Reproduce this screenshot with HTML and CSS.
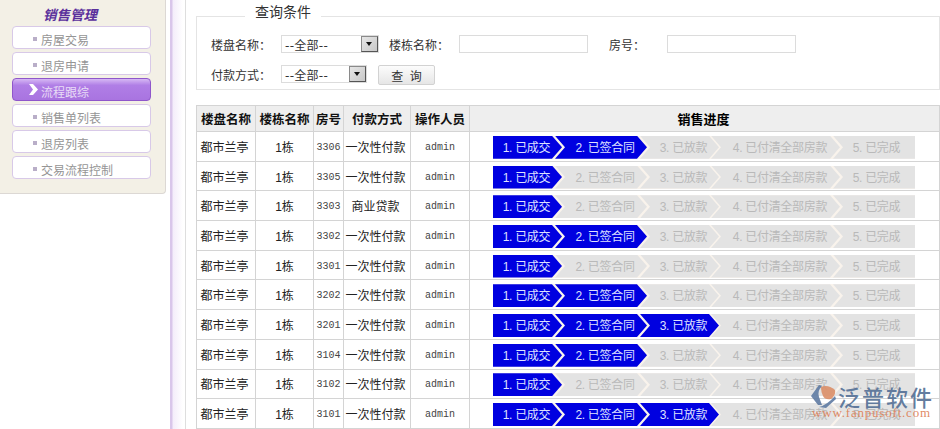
FILE: index.html
```html
<!DOCTYPE html>
<html lang="zh-CN">
<head>
<meta charset="utf-8">
<title>销售管理 - 流程跟综</title>
<link rel="stylesheet" href="styles.css">
</head>
<body>
<div class="page">
  <aside class="sidebar">
    <h2 class="side-title">销售管理</h2>
    <ul class="menu">
      <li class="menu-item">房屋交易</li>
      <li class="menu-item">退房申请</li>
      <li class="menu-item active">流程跟综</li>
      <li class="menu-item">销售单列表</li>
      <li class="menu-item">退房列表</li>
      <li class="menu-item">交易流程控制</li>
    </ul>
  </aside>
  <div class="stripe"></div>
  <main class="main">
    <fieldset class="filter">
      <legend class="legend">查询条件</legend>
      <div class="filter-row">
        <label class="lbl">楼盘名称：</label>
        <div class="select wide"><span class="select-text">--全部--</span><span class="select-btn"></span></div>
        <label class="lbl lbl-2">楼栋名称：</label>
        <div class="text-input"></div>
        <label class="lbl lbl-3">房号：</label>
        <div class="text-input"></div>
      </div>
      <div class="filter-row second">
        <label class="lbl">付款方式：</label>
        <div class="select narrow"><span class="select-text">--全部--</span><span class="select-btn"></span></div>
        <button class="query" type="button">查 询</button>
      </div>
    </fieldset>
    <table class="grid">
      <colgroup><col class="c1"><col class="c2"><col class="c3"><col class="c4"><col class="c5"><col></colgroup>
      <thead>
        <tr><th>楼盘名称</th><th>楼栋名称</th><th>房号</th><th>付款方式</th><th>操作人员</th><th class="th-prog">销售进度</th></tr>
      </thead>
      <tbody>
        <tr><td class="nudge">都市兰亭</td><td>1栋</td><td class="mono">3306</td><td class="nudge">一次性付款</td><td class="mono">admin</td><td class="prog"><div class="track"><span class="seg s1 on">1. 已成交</span><span class="seg s2 on">2. 已签合同</span><span class="seg s3">3. 已放款</span><span class="seg s4">4. 已付清全部房款</span><span class="seg s5">5. 已完成</span></div></td></tr>
        <tr><td class="nudge">都市兰亭</td><td>1栋</td><td class="mono">3305</td><td class="nudge">一次性付款</td><td class="mono">admin</td><td class="prog"><div class="track"><span class="seg s1 on">1. 已成交</span><span class="seg s2">2. 已签合同</span><span class="seg s3">3. 已放款</span><span class="seg s4">4. 已付清全部房款</span><span class="seg s5">5. 已完成</span></div></td></tr>
        <tr><td class="nudge">都市兰亭</td><td>1栋</td><td class="mono">3303</td><td class="nudge">商业贷款</td><td class="mono">admin</td><td class="prog"><div class="track"><span class="seg s1 on">1. 已成交</span><span class="seg s2">2. 已签合同</span><span class="seg s3">3. 已放款</span><span class="seg s4">4. 已付清全部房款</span><span class="seg s5">5. 已完成</span></div></td></tr>
        <tr><td class="nudge">都市兰亭</td><td>1栋</td><td class="mono">3302</td><td class="nudge">一次性付款</td><td class="mono">admin</td><td class="prog"><div class="track"><span class="seg s1 on">1. 已成交</span><span class="seg s2 on">2. 已签合同</span><span class="seg s3">3. 已放款</span><span class="seg s4">4. 已付清全部房款</span><span class="seg s5">5. 已完成</span></div></td></tr>
        <tr><td class="nudge">都市兰亭</td><td>1栋</td><td class="mono">3301</td><td class="nudge">一次性付款</td><td class="mono">admin</td><td class="prog"><div class="track"><span class="seg s1 on">1. 已成交</span><span class="seg s2">2. 已签合同</span><span class="seg s3">3. 已放款</span><span class="seg s4">4. 已付清全部房款</span><span class="seg s5">5. 已完成</span></div></td></tr>
        <tr><td class="nudge">都市兰亭</td><td>1栋</td><td class="mono">3202</td><td class="nudge">一次性付款</td><td class="mono">admin</td><td class="prog"><div class="track"><span class="seg s1 on">1. 已成交</span><span class="seg s2 on">2. 已签合同</span><span class="seg s3">3. 已放款</span><span class="seg s4">4. 已付清全部房款</span><span class="seg s5">5. 已完成</span></div></td></tr>
        <tr><td class="nudge">都市兰亭</td><td>1栋</td><td class="mono">3201</td><td class="nudge">一次性付款</td><td class="mono">admin</td><td class="prog"><div class="track"><span class="seg s1 on">1. 已成交</span><span class="seg s2 on">2. 已签合同</span><span class="seg s3 on">3. 已放款</span><span class="seg s4">4. 已付清全部房款</span><span class="seg s5">5. 已完成</span></div></td></tr>
        <tr><td class="nudge">都市兰亭</td><td>1栋</td><td class="mono">3104</td><td class="nudge">一次性付款</td><td class="mono">admin</td><td class="prog"><div class="track"><span class="seg s1 on">1. 已成交</span><span class="seg s2 on">2. 已签合同</span><span class="seg s3">3. 已放款</span><span class="seg s4">4. 已付清全部房款</span><span class="seg s5">5. 已完成</span></div></td></tr>
        <tr><td class="nudge">都市兰亭</td><td>1栋</td><td class="mono">3102</td><td class="nudge">一次性付款</td><td class="mono">admin</td><td class="prog"><div class="track"><span class="seg s1 on">1. 已成交</span><span class="seg s2">2. 已签合同</span><span class="seg s3">3. 已放款</span><span class="seg s4">4. 已付清全部房款</span><span class="seg s5">5. 已完成</span></div></td></tr>
        <tr><td class="nudge">都市兰亭</td><td>1栋</td><td class="mono">3101</td><td class="nudge">一次性付款</td><td class="mono">admin</td><td class="prog"><div class="track"><span class="seg s1 on">1. 已成交</span><span class="seg s2 on">2. 已签合同</span><span class="seg s3 on">3. 已放款</span><span class="seg s4">4. 已付清全部房款</span><span class="seg s5">5. 已完成</span></div></td></tr>
      </tbody>
    </table>
  </main>
</div>
<div class="watermark">
  <svg class="wm-icon" viewBox="0 0 26 24" width="26" height="24" aria-hidden="true">
    <path d="M0 11 L8 0 L11 1 Q6 6 8 12 L11 20 L7 20 Z" fill="#5f7ba3"/>
    <path d="M10 2 Q17 -1 24 5 Q25 10 20 14 Q14 15 12 11 Q10 7 10 2 Z" fill="#dc8f68"/>
    <path d="M24 11 L25 14 L15 23 L8 22 Q16 20 24 11 Z" fill="#5f7ba3"/>
  </svg>
  <span class="wm-name">泛普软件</span>
  <span class="wm-url">www.fanpusoft.com</span>
</div>
</body>
</html>
```
FILE: styles.css
```css
* { box-sizing: border-box; }
html, body { margin: 0; padding: 0; background: #fff; }
body {
  width: 940px;
  height: 429px;
  overflow: hidden;
  position: relative;
  font-family: "Liberation Sans", "Noto Sans CJK SC", sans-serif;
  font-size: 12px;
  color: #333;
}
.page { display: flex; align-items: flex-start; width: 940px; height: 429px; }

/* sidebar */
.sidebar {
  flex: none;
  width: 166px;
  height: 194px;
  background: #f3f0e6;
  border-right: 1px solid #dcd8d4;
  border-bottom: 1px solid #dcd8d4;
  border-bottom-right-radius: 4px;
  padding: 6px 0 0 12px;
}
.side-title {
  margin: 0 0 0 31px;
  height: 20px;
  line-height: 20px;
  font-size: 13.5px;
  font-weight: bold;
  font-style: italic;
  color: #5a2f9c;
}
.menu { list-style: none; margin: 0; padding: 0; display: flex; flex-direction: column; gap: 3px; width: 139px; }
.menu-item {
  position: relative;
  height: 23px;
  line-height: 21px;
  padding: 4px 0 0 28px;
  background: #fff;
  border: 1px solid #d8c9e8;
  border-radius: 4px;
  color: #959595;
}
.menu-item::before {
  content: "";
  position: absolute;
  left: 20px;
  top: 10px;
  width: 4px;
  height: 4px;
  background: #b9aec8;
}
.menu-item.active {
  background: linear-gradient(#d6b8f4, #b07ee6 30%, #a974e0);
  border-color: #8f56cb;
  color: #e8dcf6;
}
.menu-item.active::before {
  left: 16px;
  top: 5px;
  width: 9px;
  height: 11px;
  background: #fff;
  clip-path: polygon(0 0, 4px 0, 100% 50%, 4px 100%, 0 100%, 4px 50%);
}

/* stripe */
.stripe {
  flex: none;
  width: 16px;
  height: 429px;
  margin-left: 4px;
  background: linear-gradient(90deg, #d9c6ea 0, #d9c6ea 2px, #f4edfa 3px, #fff 13px);
  border-right: 1px solid #dedede;
}

/* main */
.main { flex: none; width: 744px; margin-left: 10px; padding-top: 6px; }
.filter {
  margin: 0;
  padding: 9px 0 0 14px;
  height: 84px;
  min-width: 0;
  border: 1px solid #e4e4e4;
}
.legend {
  margin-left: 34px;
  padding: 0 10px;
  height: 20px;
  line-height: 12px;
  font-size: 14px;
  color: #333;
}
.filter-row { display: flex; align-items: center; height: 18px; }
.filter-row.second { margin-top: 12px; }
.lbl { flex: none; width: 70px; color: #333; font-family: "Liberation Sans", "Noto Sans CJK TC", sans-serif; }
.lbl-2 { margin-left: 10px; }
.lbl-3 { margin-left: 21px; width: 58px; }
.select {
  flex: none;
  display: flex;
  align-items: center;
  justify-content: space-between;
  height: 18px;
  padding: 0 0 0 3px;
  border: 1px solid #dcdcdc;
  background: #fff;
}
.select.wide { width: 98px; }
.select.narrow { width: 86px; }
.select-text { color: #333; font-family: "DejaVu Sans", "Noto Sans CJK SC", sans-serif; letter-spacing: 0.3px; }
.select-btn {
  position: relative;
  width: 17px;
  height: 16px;
  background: linear-gradient(135deg, #e6e6e6, #c8c8c8);
  border: 1px solid #8a8a8a;
  border-right-color: #555;
  border-bottom-color: #555;
}
.select-btn::after {
  content: "";
  position: absolute;
  left: 4px;
  top: 5px;
  border-left: 3.5px solid transparent;
  border-right: 3.5px solid transparent;
  border-top: 4px solid #111;
}
.text-input { flex: none; width: 129px; height: 18px; border: 1px solid #dcdcdc; background: #fff; }
.query {
  flex: none;
  align-self: flex-start;
  width: 57px;
  height: 20px;
  margin-left: 11px;
  padding: 0;
  font: inherit;
  word-spacing: 3px;
  color: #333;
  background: linear-gradient(#fcfcfc, #e6e6e6);
  border: 1px solid #d2d2d2;
  border-radius: 2px;
}

/* table */
.grid {
  width: 744px;
  margin-top: 15px;
  table-layout: fixed;
  border-collapse: collapse;
  color: #222;
}
.c1 { width: 59px; }
.c2 { width: 58px; }
.c3 { width: 30px; }
.c4 { width: 67px; }
.c5 { width: 59px; }
.grid th, .grid td {
  padding: 0;
  border: 1px solid #d4d4d4;
  text-align: center;
  white-space: nowrap;
}
.grid th { height: 26px; background: #eeeeee; color: #111; font-weight: bold; font-size: 12.5px; }
.grid th.th-prog { font-size: 13px; padding-right: 2px; color: #000; }
.grid td { height: 29.7px; }
.grid td.nudge { padding-right: 3px; }
.grid td.mono { font-family: "Liberation Mono", monospace; font-size: 10px; color: #444; padding-top: 2px; }
.grid td.prog { padding: 2px 0 0 23px; }

/* progress chevrons */
.track {
  display: flex;
  width: 422px;
  height: 23px;
  background: #f9f3ec;
}
.seg {
  flex: none;
  display: block;
  height: 23px;
  line-height: 25px;
  text-align: center;
  letter-spacing: -0.3px;
  background: #e3e3e3;
  color: #b9b9b9;
  clip-path: polygon(0 0, calc(100% - 10px) 0, 100% 50%, calc(100% - 10px) 100%, 0 100%, 10px 50%);
}
.seg.on { background: #0000e0; color: #dfe2ff; }
.s1 { width: 69px; padding-right: 2px; clip-path: polygon(0 0, calc(100% - 10px) 0, 100% 50%, calc(100% - 10px) 100%, 0 100%); }
.s2 { width: 92px; margin-left: -7px; padding-left: 8px; }
.s3 { width: 79px; margin-left: -7px; padding-left: 8px; }
.s4 { width: 129px; margin-left: -8px; padding-left: 9px; }
.s5 { width: 82px; margin-left: -7px; padding-left: 5px; clip-path: polygon(0 0, 100% 0, 100% 100%, 0 100%, 10px 50%); }

/* watermark overlay */
.watermark { position: absolute; left: 810px; top: 384px; width: 125px; height: 40px; }
.wm-icon { position: absolute; left: 1px; top: 1px; opacity: 0.9; }
.wm-name {
  position: absolute;
  left: 28px;
  top: -2px;
  font-size: 22px;
  line-height: 28px;
  letter-spacing: 2px;
  white-space: nowrap;
  color: rgba(84, 112, 150, 0.92);
  font-family: "Noto Sans CJK SC", sans-serif;
  font-weight: 500;
}
.wm-url {
  position: absolute;
  left: 2px;
  top: 22px;
  font-family: "Liberation Serif", serif;
  font-size: 13px;
  line-height: 14px;
  letter-spacing: 0.8px;
  white-space: nowrap;
  color: rgba(222, 130, 90, 0.95);
}
```
